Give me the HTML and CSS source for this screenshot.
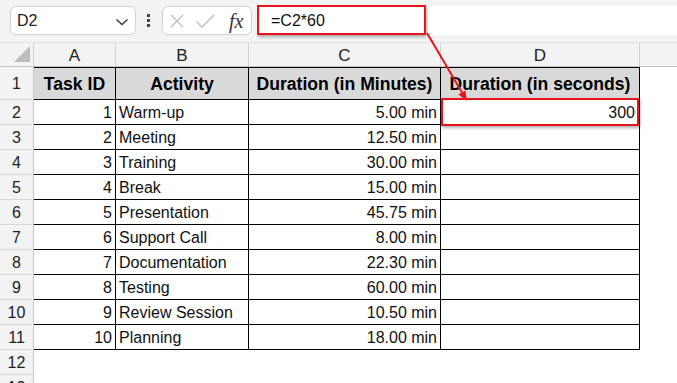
FILE: index.html
```html
<!DOCTYPE html>
<html>
<head>
<meta charset="utf-8">
<link rel="stylesheet" href="styles.css">
</head>
<body>
<div class="app">
  <div class="topbar">
    <div class="namebox">
      <span class="name">D2</span>
      <svg class="chev" width="14" height="8" viewBox="0 0 14 8"><polyline points="1.5,1.5 7,6.5 12.5,1.5" fill="none" stroke="#333" stroke-width="1.3"/></svg>
    </div>
    <div class="dots"><i></i><i></i><i></i></div>
    <div class="fxbox">
      <svg class="ico-x" width="16" height="16" viewBox="0 0 16 16"><path d="M2 2 L14 14 M14 2 L2 14" stroke="#bcbcbc" stroke-width="1.3" fill="none"/></svg>
      <svg class="ico-check" width="20" height="16" viewBox="0 0 20 16"><path d="M1.5 8.5 L7 14 L19 2" stroke="#bcbcbc" stroke-width="1.3" fill="none"/></svg>
      <span class="fx">fx</span>
    </div>
    <div class="formula">
      <span class="ftext">=C2*60</span>
      <div class="hl hl-formula"></div>
    </div>
  </div>
  <div class="sheet">
    <div class="corner"><svg width="17" height="17" viewBox="0 0 17 17"><polygon points="0,16 16,0 16,16" fill="#bdbdbd"/></svg></div>
    <div class="ch">A</div><div class="ch">B</div><div class="ch">C</div><div class="ch">D</div><div class="ch ch-e"></div>

    <div class="rh">1</div>
    <div class="c hd">Task ID</div><div class="c hd">Activity</div><div class="c hd">Duration (in Minutes)</div><div class="c hd">Duration (in seconds)</div><div class="e"></div>

    <div class="rh">2</div>
    <div class="c num">1</div><div class="c txt">Warm-up</div><div class="c dur">5.00 min</div><div class="c res">300<div class="hl hl-cell"></div></div><div class="e"></div>

    <div class="rh">3</div>
    <div class="c num">2</div><div class="c txt">Meeting</div><div class="c dur">12.50 min</div><div class="c res"></div><div class="e"></div>

    <div class="rh">4</div>
    <div class="c num">3</div><div class="c txt">Training</div><div class="c dur">30.00 min</div><div class="c res"></div><div class="e"></div>

    <div class="rh">5</div>
    <div class="c num">4</div><div class="c txt">Break</div><div class="c dur">15.00 min</div><div class="c res"></div><div class="e"></div>

    <div class="rh">6</div>
    <div class="c num">5</div><div class="c txt">Presentation</div><div class="c dur">45.75 min</div><div class="c res"></div><div class="e"></div>

    <div class="rh">7</div>
    <div class="c num">6</div><div class="c txt">Support Call</div><div class="c dur">8.00 min</div><div class="c res"></div><div class="e"></div>

    <div class="rh">8</div>
    <div class="c num">7</div><div class="c txt">Documentation</div><div class="c dur">22.30 min</div><div class="c res"></div><div class="e"></div>

    <div class="rh">9</div>
    <div class="c num">8</div><div class="c txt">Testing</div><div class="c dur">60.00 min</div><div class="c res"></div><div class="e"></div>

    <div class="rh">10</div>
    <div class="c num">9</div><div class="c txt">Review Session</div><div class="c dur">10.50 min</div><div class="c res"></div><div class="e"></div>

    <div class="rh">11</div>
    <div class="c num">10</div><div class="c txt">Planning</div><div class="c dur">18.00 min</div><div class="c res"></div><div class="e"></div>

    <div class="rh">12</div>
    <div class="e"></div><div class="e"></div><div class="e"></div><div class="e"></div><div class="e"></div>

    <div class="rh">13</div>
    <div class="e"></div><div class="e"></div><div class="e"></div><div class="e"></div><div class="e"></div>
  </div>
  <svg class="arrow" width="677" height="383" viewBox="0 0 677 383">
    <line x1="427" y1="33" x2="462" y2="92.5" stroke="#e8141c" stroke-width="2"/>
    <polygon points="467,101 458.4,94.4 465.4,90.4" fill="#e8141c"/>
  </svg>
</div>
</body>
</html>
```
FILE: styles.css
```css
html, body {
  margin: 0;
  padding: 0;
}
body {
  background: #f3f3f3;
  font-family: "Liberation Sans", Arial, sans-serif;
  color: #111;
}
.app {
  position: relative;
  width: 677px;
  height: 383px;
  overflow: hidden;
}
.topbar {
  border-bottom: 1px solid #e2e2e2;
  background: #f3f3f3;
  display: flex;
  align-items: flex-start;
  padding-top: 6px;
  box-sizing: border-box;
  height: 43px;
}
.namebox {
  margin-left: 10px;
  width: 126px;
  height: 29px;
  box-sizing: border-box;
  background: #fff;
  border: 1px solid #d3d3d3;
  border-radius: 6px;
  display: flex;
  align-items: center;
  justify-content: space-between;
  padding: 0 6px 0 6px;
}
.name {
  font-size: 16px;
  color: #222;
}
.chev {
  display: block;
  margin-top: 2px;
}
.dots {
  margin-left: 11px;
  width: 4px;
  height: 29px;
  display: flex;
  flex-direction: column;
  justify-content: center;
  gap: 2px;
}
.dots i {
  display: block;
  width: 3px;
  height: 3px;
  background: #444;
}
.fxbox {
  margin-left: 11px;
  width: 90px;
  height: 29px;
  box-sizing: border-box;
  background: #fff;
  border: 1px solid #d3d3d3;
  border-radius: 6px;
  display: flex;
  align-items: center;
  padding-left: 6px;
}
.ico-x { display: block; }
.ico-check { display: block; margin-left: 10px; }
.fx {
  margin-left: 14px;
  font-family: "Liberation Serif", "Times New Roman", serif;
  font-style: italic;
  font-size: 20px;
  color: #333;
  line-height: 20px;
}
.formula {
  position: relative;
  margin-left: 4px;
  flex: 1;
  height: 29px;
  background: #fff;
  display: flex;
  align-items: center;
  padding-left: 15px;
}
.ftext {
  font-size: 16px;
  color: #111;
}
.hl {
  position: absolute;
  box-sizing: border-box;
  border: 2.5px solid #e8141c;
  box-shadow: 1px 2px 3px rgba(0,0,0,0.3);
  pointer-events: none;
}
.hl-formula {
  left: 1px;
  top: -1px;
  width: 169px;
  height: 30px;
}
.sheet {
  display: grid;
  grid-template-columns: 34px 82px 133px 192px 199px 1fr;
  grid-template-rows: 24px 33px repeat(12, 25px);
  background: #fff;
}
.corner {
  background: #f3f3f3;
  border-right: 1px solid #d2d2d2;
  border-bottom: 1px solid #c4c4c4;
  box-sizing: border-box;
  display: flex;
  align-items: flex-end;
  justify-content: flex-end;
  padding: 0 2px 3px 0;
}
.corner svg { display: block; }
.ch {
  background: #f3f3f3;
  border-right: 1px solid #d2d2d2;
  border-bottom: 1px solid #c4c4c4;
  box-sizing: border-box;
  display: flex;
  align-items: center;
  justify-content: center;
  padding-top: 2px;
  font-size: 17px;
  color: #222;
}
.ch-e { border-right: none; }
.rh {
  background: #f3f3f3;
  border-right: 1px solid #c8c8c8;
  border-bottom: 1px solid #d6d6d6;
  box-sizing: border-box;
  display: flex;
  align-items: center;
  justify-content: center;
  padding-top: 2px;
  font-size: 16px;
  color: #222;
}
.c {
  position: relative;
  box-sizing: border-box;
  border-right: 1px solid #000;
  border-bottom: 1px solid #000;
  display: flex;
  align-items: center;
  padding-top: 2px;
  font-size: 16px;
  color: #111;
  white-space: nowrap;
}
.hd {
  background: #d9d9d9;
  border-top: 1px solid #000;
  justify-content: center;
  font-weight: bold;
  font-size: 17.6px;
  color: #000;
}
.num {
  justify-content: flex-end;
  padding-right: 3px;
}
.txt {
  padding-left: 3px;
}
.dur {
  justify-content: flex-end;
  padding-right: 3px;
}
.res {
  justify-content: flex-end;
  padding-right: 4px;
}
.e {
  background: #fff;
}
.hl-cell {
  left: 0;
  top: -2px;
  right: 0;
  bottom: -2px;
}
.arrow {
  position: absolute;
  left: 0;
  top: 0;
  pointer-events: none;
}
```
